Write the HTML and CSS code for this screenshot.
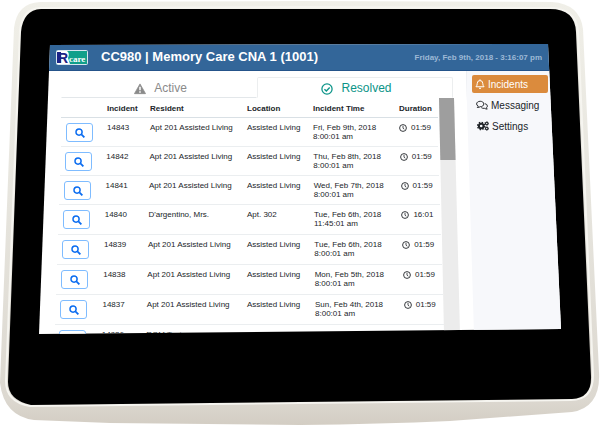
FILE: index.html
```html
<!DOCTYPE html>
<html lang="en">
<head>
<meta charset="utf-8">
<title>CC980 | Memory Care CNA 1 (1001)</title>
<link rel="stylesheet" href="styles.css">
</head>
<body>
<svg class="symbols" aria-hidden="true">
  <symbol id="search" viewBox="0 0 16 16"><circle cx="6.5" cy="6.5" r="4.9" fill="none" stroke="currentColor" stroke-width="2.4"/><path d="M10.2 10.2 15 15" stroke="currentColor" stroke-width="2.9"/></symbol>
  <symbol id="clock" viewBox="0 0 16 16"><circle cx="8" cy="8" r="6.8" fill="none" stroke="currentColor" stroke-width="1.8"/><path d="M8 3.8V8.4l2.6 2" fill="none" stroke="currentColor" stroke-width="1.6"/></symbol>
</svg>
<div class="device">
  <svg class="casing" viewBox="0 0 600 425" preserveAspectRatio="none" aria-hidden="true">
    <defs>
      <linearGradient id="shell" x1="0" y1="0" x2="0" y2="1">
        <stop offset="0" stop-color="#f0efe8"/><stop offset=".5" stop-color="#e6e4dd"/><stop offset=".94" stop-color="#dcd8d0"/><stop offset="1" stop-color="#d3cdc3"/>
      </linearGradient>
    </defs>
    <path d="M40 2 300 1 552 2Q580 4 583 29L599 372Q601 407 572 412L450 421Q380 424 300 425L110 423 34 420Q4 416 0 383L14 28Q17 3 40 2Z" fill="url(#shell)"/>
    <path d="M40 8 300 7 551 8Q576 9 578 31L593 375Q593 400 571 400L300 403 30 406Q6 402 6 381L20 31Q22 9 40 8Z" fill="none" stroke="#f6f5f0" stroke-width="2"/>
    <path d="M41 9H550Q575 9 576 32L591 376Q592 398 572 399L300 402 31 405Q8 400 8 382L21 32Q23 10 41 9Z" fill="#000"/>
  </svg>
  <div class="screen">
    <header class="topbar">
      <svg class="logo" viewBox="0 0 32 15" role="img" aria-label="Rcare">
        <rect x=".5" y=".5" width="31" height="14" rx="1" fill="#11a08a" stroke="#d8e6ee"/>
        <path d="M1 1H11Q14 3 12 8L14 14H1Z" fill="#fff"/>
        <path d="M1 2H5V13H1Z" fill="#1b2487"/>
        <text class="logo-r" x="2" y="13">R</text>
        <text class="logo-care" x="13" y="12">care</text>
      </svg>
      <h1>CC980 | Memory Care CNA 1 (1001)</h1>
      <time>Friday, Feb 9th, 2018 - 3:16:07 pm</time>
    </header>
    <div class="body">
      <main>
        <div class="tabs" role="tablist">
          <button class="tab" role="tab" aria-selected="false">
            <svg class="icon-tab" viewBox="0 0 16 16"><path d="M8 1.2 15.4 14.2H.6Z" fill="currentColor" stroke="currentColor" stroke-linejoin="round"/><path d="M8 5V9.7M8 11V13" stroke="#fff" stroke-width="2"/></svg>
            Active
          </button>
          <button class="tab selected" role="tab" aria-selected="true">
            <svg class="icon-tab" viewBox="0 0 16 16"><circle cx="8" cy="8" r="6.8" fill="none" stroke="currentColor" stroke-width="1.7"/><path d="m4.6 8.2 2.5 2.4 4.5-4.7" fill="none" stroke="currentColor" stroke-width="1.8"/></svg>
            Resolved
          </button>
        </div>
        <div class="list">
          <table>
            <thead><tr><th></th><th>Incident</th><th>Resident</th><th>Location</th><th>Incident Time</th><th>Duration</th></tr></thead>
            <tbody>
              <tr style="--i:0"><td><button class="view" aria-label="View 14843"><svg><use href="#search"/></svg></button></td><td>14843</td><td>Apt 201 Assisted Living</td><td>Assisted Living</td><td>Fri, Feb 9th, 2018<br>8:00:01 am</td><td><span class="duration"><svg><use href="#clock"/></svg>01:59</span></td></tr>
              <tr style="--i:1"><td><button class="view" aria-label="View 14842"><svg><use href="#search"/></svg></button></td><td>14842</td><td>Apt 201 Assisted Living</td><td>Assisted Living</td><td>Thu, Feb 8th, 2018<br>8:00:01 am</td><td><span class="duration"><svg><use href="#clock"/></svg>01:59</span></td></tr>
              <tr style="--i:2"><td><button class="view" aria-label="View 14841"><svg><use href="#search"/></svg></button></td><td>14841</td><td>Apt 201 Assisted Living</td><td>Assisted Living</td><td>Wed, Feb 7th, 2018<br>8:00:01 am</td><td><span class="duration"><svg><use href="#clock"/></svg>01:59</span></td></tr>
              <tr style="--i:3"><td><button class="view" aria-label="View 14840"><svg><use href="#search"/></svg></button></td><td>14840</td><td>D'argentino, Mrs.</td><td>Apt. 302</td><td>Tue, Feb 6th, 2018<br>11:45:01 am</td><td><span class="duration"><svg><use href="#clock"/></svg>16:01</span></td></tr>
              <tr style="--i:4"><td><button class="view" aria-label="View 14839"><svg><use href="#search"/></svg></button></td><td>14839</td><td>Apt 201 Assisted Living</td><td>Assisted Living</td><td>Tue, Feb 6th, 2018<br>8:00:01 am</td><td><span class="duration"><svg><use href="#clock"/></svg>01:59</span></td></tr>
              <tr style="--i:5"><td><button class="view" aria-label="View 14838"><svg><use href="#search"/></svg></button></td><td>14838</td><td>Apt 201 Assisted Living</td><td>Assisted Living</td><td>Mon, Feb 5th, 2018<br>8:00:01 am</td><td><span class="duration"><svg><use href="#clock"/></svg>01:59</span></td></tr>
              <tr style="--i:6"><td><button class="view" aria-label="View 14837"><svg><use href="#search"/></svg></button></td><td>14837</td><td>Apt 201 Assisted Living</td><td>Assisted Living</td><td>Sun, Feb 4th, 2018<br>8:00:01 am</td><td><span class="duration"><svg><use href="#clock"/></svg>01:59</span></td></tr>
              <tr style="--i:7"><td><button class="view" aria-label="View 14836"><svg><use href="#search"/></svg></button></td><td>14836</td><td>ROM Test</td><td>Testing</td><td>Sat, Feb 3rd, 2018<br>8:00:01 am</td><td><span class="duration"><svg><use href="#clock"/></svg>00:18</span></td></tr>
            </tbody>
          </table>
          <div class="scrollbar"><div class="thumb"></div></div>
        </div>
      </main>
      <nav>
        <a class="current" href="#incidents" style="--i:0"><svg class="icon-nav" viewBox="0 0 16 16"><path d="M8 .5V2.3M1.5 12.4H14.5Q12.4 10.5 12.4 7 12.4 2.5 8 2.5 3.6 2.5 3.6 7 3.6 10.5 1.5 12.4Z" fill="none" stroke="currentColor" stroke-width="1.6" stroke-linejoin="round"/><path d="M6 13.8H10Q9.6 15.8 8 15.8 6.4 15.8 6 13.8Z" fill="currentColor"/></svg>Incidents</a>
        <a href="#messaging" style="--i:1"><svg class="icon-nav wide" viewBox="0 0 20 16"><path d="M2.2 12.2Q3.6 11.2 3.8 9.8 1 8.8 1 6.3C1 3.6 3.6 1.8 7 1.8S13 3.6 13 6.3 10.4 10.8 7 10.8Q5 12.4 2.2 12.2Z" fill="none" stroke="currentColor" stroke-width="1.6" stroke-linejoin="round"/><path d="M14.7 5.7Q19 6.6 19 9.8 19 11.4 17.4 12.6 17.6 13.8 18.8 14.8 16.2 14.9 14.6 13.6 10.8 14 8.8 12.3" fill="none" stroke="currentColor" stroke-width="1.6" stroke-linejoin="round"/></svg>Messaging</a>
        <a href="#settings" style="--i:2"><svg class="icon-nav wide" viewBox="0 0 20 16"><g fill="none" stroke="currentColor"><circle cx="7" cy="8" r="3.9" stroke-width="3.4"/><circle cx="7" cy="8" r="6" stroke-width="2.4" stroke-dasharray="2.36 2.36"/><circle cx="16.2" cy="3.8" r="2" stroke-width="1.8"/><circle cx="16.2" cy="3.8" r="3.1" stroke-width="1.4" stroke-dasharray="1.62 1.62"/><circle cx="16.2" cy="12.2" r="2" stroke-width="1.8"/><circle cx="16.2" cy="12.2" r="3.1" stroke-width="1.4" stroke-dasharray="1.62 1.62"/></g></svg>Settings</a>
      </nav>
    </div>
  </div>
</div>
</body>
</html>
```

FILE: styles.css
```css
* {
  box-sizing: border-box;
}

body {
  margin: 0;
  background: #fff;
  color: #212529;
  font: 8px/9px "Liberation Sans", Arial, sans-serif;
}

button {
  margin: 0;
  font: inherit;
  cursor: pointer;
}

.symbols {
  position: absolute;
  width: 0;
  height: 0;
}

.device {
  position: relative;
  display: flex;
  height: 100vh;
  padding: 44px 39px 91px;
}

.casing {
  position: absolute;
  inset: 0;
  width: 100%;
  height: 100%;
}

.screen {
  position: relative;
  flex: 1;
  display: flex;
  flex-direction: column;
  min-width: 0;
  overflow: hidden;
  background: #fff;
  clip-path: polygon(11px 1px, calc(100% - 13px) 0, 100% calc(100% - 5px), 0 100%);
}

.topbar {
  flex: none;
  display: flex;
  align-items: center;
  height: 27px;
  padding: 0 19px 0 17px;
  background: #336699;
  border-bottom: 1px solid #25548a;
  color: #fff;
}

.logo {
  width: 32px;
  height: 15px;
  margin-right: 13px;
}

.logo-r {
  fill: #1b2487;
  font: bold 14px "Liberation Sans", Arial, sans-serif;
}

.logo-care {
  fill: #fff;
  font: bold 9px "Liberation Serif", serif;
}

h1 {
  margin: 0;
  font-size: 13px;
  line-height: 18px;
  white-space: nowrap;
}

time {
  margin-left: auto;
  color: #9db9d6;
  font-weight: bold;
  white-space: nowrap;
}

.body {
  flex: 1;
  display: flex;
  min-height: 0;
}

main {
  flex: 1;
  display: flex;
  flex-direction: column;
  min-width: 0;
  padding: 6px 6px 0 22px;
}

.tabs {
  flex: none;
  display: flex;
  height: 21px;
  margin-right: 7px;
}

.tab {
  flex: 1;
  display: flex;
  align-items: center;
  justify-content: center;
  gap: 8px;
  padding: 2px 0 0 3px;
  background: none;
  border: 1px solid transparent;
  border-bottom-color: #e3e7ea;
  color: #8a8a8a;
  font-size: 12px;
}

.tab.selected {
  border-color: #eceeef;
  border-bottom-color: transparent;
  border-radius: 2px 2px 0 0;
  color: #0b9488;
}

.icon-tab {
  width: 12px;
  height: 12px;
}

.list {
  flex: 1;
  display: flex;
  gap: 1px;
  min-height: 0;
}

table,
thead,
tbody {
  display: block;
}

table {
  flex: 1;
  min-width: 0;
}

tr {
  display: grid;
  grid-template-columns: 46fr 43fr 97fr 66fr 86fr 39fr;
  height: 29px;
  margin: 0 calc(var(--i, 0) * -1px);
  border-bottom: 1px solid #ebeef0;
}

tbody tr:nth-child(n + 4) {
  height: 30px;
}

thead tr {
  height: 20px;
  border-bottom-color: #d9e0e5;
}

th,
td {
  min-width: 0;
  padding: 5px 0 0;
  text-align: left;
  white-space: nowrap;
}

th {
  padding-top: 6px;
}

td:first-child {
  padding-left: 5px;
}

.view {
  display: grid;
  place-items: center;
  width: 27px;
  height: 19px;
  padding: 0;
  background: #fff;
  border: 1px solid #7fbcff;
  border-radius: 3px;
  color: #0a6cf0;
}

.view svg {
  width: 10px;
  height: 10px;
}

.duration {
  display: flex;
  align-items: center;
  gap: 4px;
}

.duration svg {
  width: 8px;
  height: 8px;
}

.scrollbar {
  width: 21px;
  background: #ececec;
  clip-path: polygon(0 0, 15px 0, 100% 100%, 5px 100%);
}

.thumb {
  height: 62px;
  background: #9e9e9e;
}

nav {
  width: 95px;
  padding: 4px 13px 0 5px;
  background: #f7f8fb;
  border-left: 1px solid #eceef2;
  clip-path: polygon(0 0, 100% 0, 100% 100%, 8px 100%);
}

nav a {
  display: flex;
  align-items: center;
  gap: 3px;
  height: 18px;
  margin: 0 0 3px calc(var(--i) * 1px);
  padding: 0 3px;
  border-radius: 2px;
  color: #212529;
  font-size: 10px;
  text-decoration: none;
}

nav .current {
  background: #db8b3d;
  color: #fff;
}

.icon-nav {
  width: 10px;
  height: 10px;
}

.icon-nav.wide {
  width: 12px;
}
```
